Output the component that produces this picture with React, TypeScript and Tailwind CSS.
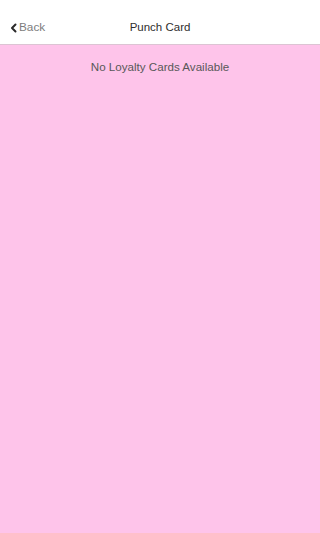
export default function App() {
  return (
    <div className="flex h-screen w-full flex-col bg-[#fec4ea] font-['Liberation_Sans',Arial,sans-serif]">
      {/* Header */}
      <div className="relative flex h-[45px] shrink-0 items-center justify-center border-b-[1.5px] border-[#dcc4d3] bg-white pt-[12px]">
        <button className="absolute left-[10px] top-[12px] flex h-[32px] items-center gap-[2px] text-[11.8px] text-[#7d7d7d]">
          <svg width="7" height="10" viewBox="0 0 7 10" fill="none">
            <path d="M5.5 1.5 2 5l3.5 3.5" stroke="#2a2a2a" strokeWidth="2" strokeLinecap="round" strokeLinejoin="round" />
          </svg>
          Back
        </button>
        <h1 className="text-[11.5px] text-[#2e2e2e]">Punch Card</h1>
      </div>

      {/* Content */}
      <div className="flex flex-1 justify-center pt-[13px]">
        <p className="text-[11.6px] text-[#585858]">No Loyalty Cards Available</p>
      </div>
    </div>
  )
}
